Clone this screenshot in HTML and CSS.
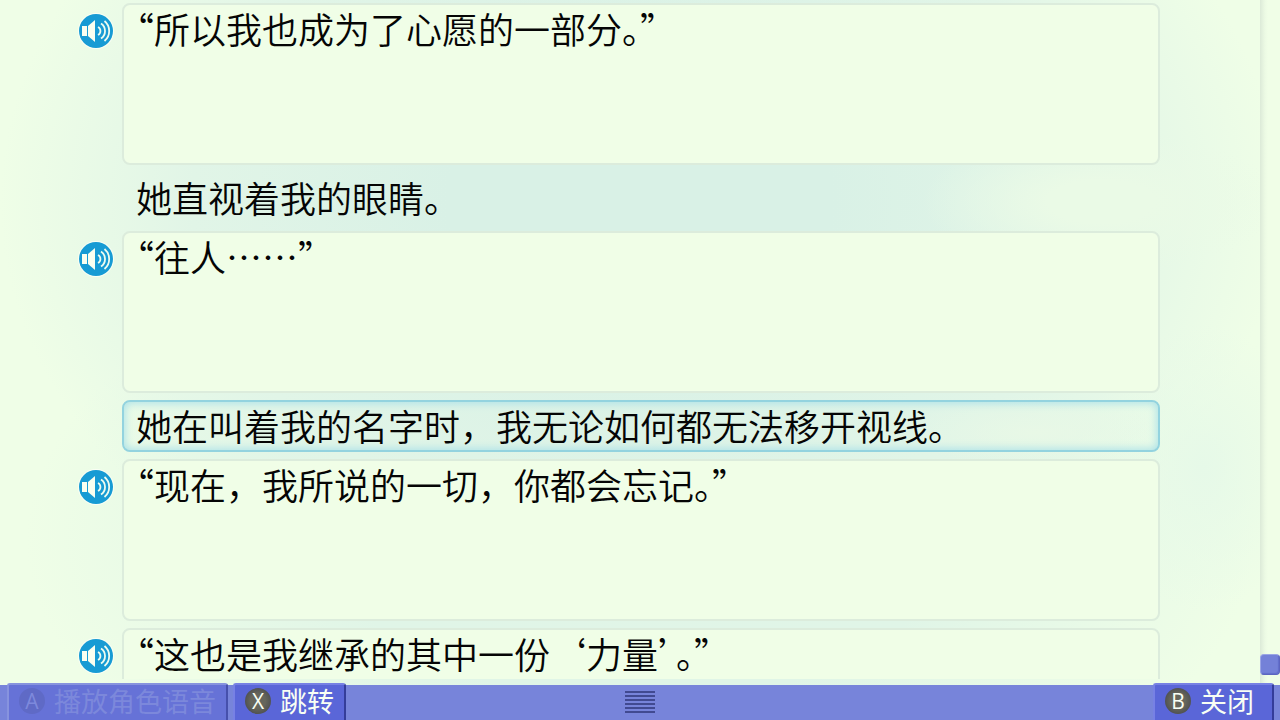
FILE: index.html
```html
<!DOCTYPE html>
<html lang="zh-CN">
<head>
<meta charset="UTF-8">
<meta name="viewport" content="width=device-width, initial-scale=1.0">
<title>文本记录</title>
<link rel="stylesheet" href="styles.css">
</head>
<body>
<svg class="defs" aria-hidden="true">
    <symbol id="speaker" viewBox="0 0 36 36">
        <circle cx="18" cy="18" r="18" fill="#fafff4"/>
        <circle cx="18" cy="18" r="17" fill="#179bd4"/>
        <path d="M4 13h5v10H4z" fill="#fafff0"/>
        <path d="M10 13l7-6v22l-7-6z" fill="#fafff0"/>
        <path d="M20 14a4.500 4.500 0 0 1 0 8M23 10.500a9 9 0 0 1 0 15M26.500 8a13 13 0 0 1 0 20" fill="none" stroke="#eefcf0" stroke-width="1.800"/>
    </symbol>
</svg>

<div class="screen">
    <main class="backlog">
        <div class="log">
            <article class="entry">
                <button class="voice" type="button" aria-label="播放语音"><svg><use href="#speaker"/></svg></button>
                <p class="line speech">“所以我也成为了心愿的一部分。”</p>
            </article>
            <article class="entry">
                <p class="line">她直视着我的眼睛。</p>
            </article>
            <article class="entry">
                <button class="voice" type="button" aria-label="播放语音"><svg><use href="#speaker"/></svg></button>
                <p class="line speech">“往人……”</p>
            </article>
            <article class="entry">
                <p class="line selected">她在叫着我的名字时，我无论如何都无法移开视线。</p>
            </article>
            <article class="entry">
                <button class="voice" type="button" aria-label="播放语音"><svg><use href="#speaker"/></svg></button>
                <p class="line speech">“现在，我所说的一切，你都会忘记。”</p>
            </article>
            <article class="entry">
                <button class="voice" type="button" aria-label="播放语音"><svg><use href="#speaker"/></svg></button>
                <p class="line speech">“这也是我继承的其中一份‘力量’。”</p>
            </article>
        </div>
        <div class="scrollbar"><div class="thumb"></div></div>
    </main>

    <footer class="bar">
        <button class="command" type="button" disabled><span class="key">A</span>播放角色语音</button>
        <button class="command" type="button"><span class="key">X</span>跳转</button>
        <button class="handle" type="button" aria-label="菜单"></button>
        <button class="command close" type="button"><span class="key">B</span>关闭</button>
    </footer>
</div>
</body>
</html>
```
FILE: styles.css
```css
* {
    box-sizing: border-box;
}
body {
    margin: 0;
    font-family: "Noto Sans CJK SC", sans-serif;
    color: #050505;
    background-color: #effee7;
}
button {
    padding: 0;
    border: none;
    font-family: inherit;
    background: none;
    cursor: pointer;
}
.defs {
    position: absolute;
    width: 0;
    height: 0;
}
.screen {
    display: flex;
    flex-direction: column;
    height: 100vh;
    overflow: hidden;
    /* soft sky behind the log */
    background:
        radial-gradient(ellipse 14% 10% at 86% 28%, #eafae6 30%, transparent),
        radial-gradient(ellipse 10% 5% at 81% 60%, #e8f8e6, transparent),
        radial-gradient(ellipse 8% 20% at 94% 65%, #e6f9e8, transparent),
        radial-gradient(ellipse 50% 65% at 50% 28%, #d9f1e6 30%, #e1f5e7 70%, transparent),
        radial-gradient(ellipse 48% 45% at 50% 75%, #e0f5e7 50%, transparent),
        #effee7;
}

/* log */
.backlog {
    display: flex;
    flex: 1;
    min-height: 0;
}
.log {
    display: flex;
    flex: 1;
    flex-direction: column;
    gap: 7px;
    margin-bottom: 6px;
    padding: 3px 100px 0 78px;
    overflow: hidden;
}
.entry {
    display: grid;
    flex-shrink: 0;
    grid-template-columns: 36px 1fr;
    column-gap: 8px;
    align-items: start;
}
.voice {
    height: 36px;
    margin-top: 10px;
}
.voice svg {
    display: block;
    width: 36px;
    height: 36px;
}
.line {
    grid-column: 2;
    min-height: 52px;
    margin: 0;
    padding: 0 12px;
    border: 2px solid transparent;
    border-radius: 8px;
    font-size: 36px;
    font-weight: 350;
    line-height: 46px;
    text-spacing-trim: trim-start;
}
.speech {
    min-height: 162px;
    border-color: #dcecdc;
    background-color: #f0fee7;
}
.selected {
    border-color: #93d3df;
    box-shadow: inset 0 0 8px 1px #a8e0e8;
}

/* scrollbar */
.scrollbar {
    display: flex;
    flex-direction: column;
    justify-content: flex-end;
    width: 20px;
    padding-bottom: 10px;
    background: linear-gradient(to right, #dcead8, #ecfae4 5px, #f0fee7 8px);
}
.thumb {
    height: 21px;
    border: 1px solid #5c65c0;
    border-top-color: #9ba6e4;
    border-left-color: #9ba6e4;
    border-radius: 4px;
    background-color: #7481d8;
    box-shadow: inset -1px -1px 1px #626dcb;
}

/* command bar */
.bar {
    position: relative;
    display: flex;
    align-items: flex-end;
    gap: 5px;
    height: 35px;
    padding: 0 6px 0 7px;
    background-color: #7784da;
}
.command {
    display: flex;
    align-items: center;
    gap: 9px;
    height: 37px;
    padding: 0 10px 3px;
    border: 2px solid #7781e4;
    border-right-color: #343d9a;
    border-bottom: none;
    border-radius: 3px 3px 0 0;
    color: #f8fff4;
    font-size: 27px;
    line-height: 30px;
    background-color: #5a66d8;
}
.command:disabled {
    border-color: #8793de;
    border-right-color: #4650ac;
    color: #7c88db;
    background-color: #6672d7;
}
.close {
    margin-left: auto;
    padding-right: 18px;
}
.key {
    width: 26px;
    height: 26px;
    border-radius: 50%;
    font-family: "Open Sans", sans-serif;
    font-size: 21px;
    line-height: 26px;
    text-align: center;
    background: radial-gradient(circle, #66665c 40%, #3c3f48);
}
.command:disabled .key {
    color: #7d89dc;
    background: #5f6ac6;
}
.handle {
    position: absolute;
    top: 6px;
    left: 50%;
    width: 30px;
    height: 22px;
    margin-left: -15px;
    background: repeating-linear-gradient(#414a91 0 2px, transparent 2px 4px);
}
```
